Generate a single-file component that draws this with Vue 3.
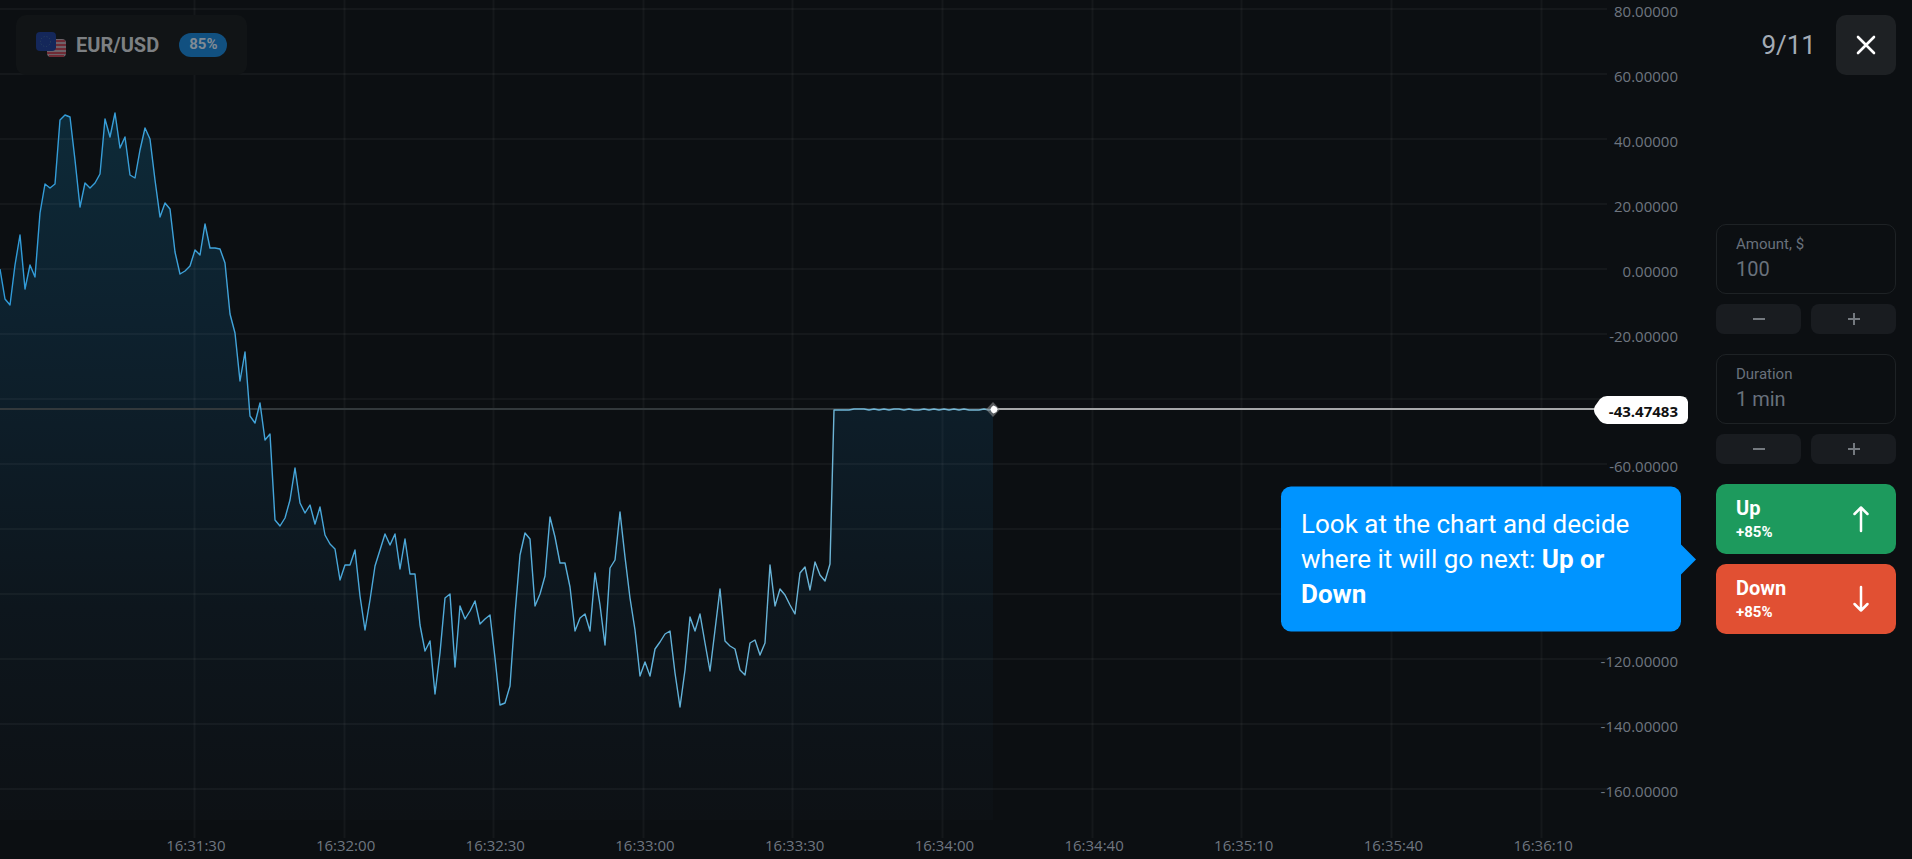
<script setup>
import { ref } from 'vue'

// Empty entries are ticks whose labels give way to the price marker and the hint
const prices = ['80.00000', '60.00000', '40.00000', '20.00000', '0.00000', '-20.00000', '', '-60.00000', '', '', '-120.00000', '-140.00000', '-160.00000']
const times = ['16:31:30', '16:32:00', '16:32:30', '16:33:00', '16:33:30', '16:34:00', '16:34:40', '16:35:10', '16:35:40', '16:36:10']

const height = 859
const current = { label: '-43.47483', y: 410 }

const rows = prices.map((_, i) => 9 + i * 65)
const columns = times.map((_, i) => Math.round(194 + i * 149.62))

// One sample every five units along the time axis
const samples = [
  269, 299, 305, 265, 235, 289, 265, 277, 213, 184, 188, 184, 120, 115, 117, 160, 207, 183, 188, 183,
  174, 119, 137, 113, 148, 137, 175, 178, 150, 128, 139, 180, 217, 203, 209, 252, 274, 271, 266, 250,
  255, 224, 248, 248, 249, 263, 314, 333, 381, 352, 416, 423, 403, 440, 434, 520, 526, 518, 500, 468,
  503, 513, 505, 524, 507, 535, 544, 549, 580, 565, 565, 550, 596, 630, 600, 566, 550, 534, 545, 534,
  569, 539, 574, 574, 625, 651, 641, 694, 653, 598, 594, 667, 606, 619, 611, 601, 624, 619, 615, 658,
  705, 703, 686, 614, 555, 533, 539, 606, 594, 576, 517, 537, 563, 563, 587, 631, 618, 614, 631, 573,
  605, 645, 568, 560, 512, 557, 598, 630, 676, 662, 676, 649, 642, 634, 631, 673, 707, 670, 617, 631,
  614, 643, 671, 630, 589, 641, 646, 649, 670, 675, 643, 640, 655, 643, 565, 606, 589, 595, 605, 614,
  573, 567, 590, 562, 575, 581, 564,
]
const ripple = [410, 410, 410, 410, 409, 409, 409, 410, 409, 410, 409, 410, 409, 409, 410, 409, 410, 410, 409, 410, 409, 410, 409, 410, 409, 410, 409, 410, 410, 410, 409, 410]
const line = [
  ...samples.map((y, i) => `${i * 5},${y}`),
  ...ripple.map((y, i) => `${834 + i * 5},${y}`),
  '993,409',
].join(' ')
const area = `0,820 ${line} 993,820`

const amount = ref('100')
const duration = ref('1 min')
</script>

<template>
  <main class="trade">
    <section class="chart" aria-label="EUR/USD chart">
      <svg class="plot" viewBox="0 0 1700 859" preserveAspectRatio="none" aria-hidden="true">
        <defs>
          <linearGradient id="area-fill" gradientUnits="userSpaceOnUse" x1="0" y1="110" x2="0" y2="820">
            <stop offset="0" stop-color="#0d2a38" />
            <stop offset="0.3" stop-color="#0d212e" />
            <stop offset="0.7" stop-color="#0d161d" />
            <stop offset="1" stop-color="#0d1115" />
          </linearGradient>
          <linearGradient id="line-stroke" gradientUnits="userSpaceOnUse" x1="0" y1="0" x2="993" y2="0">
            <stop offset="0" stop-color="#2f9ad8" />
            <stop offset="0.5" stop-color="#54addb" />
            <stop offset="1" stop-color="#78b8d4" />
          </linearGradient>
        </defs>
        <polygon :points="area" fill="url(#area-fill)" />
        <g class="grid">
          <line v-for="y in rows" :key="'r' + y" x1="0" x2="1607" :y1="y" :y2="y" />
          <line v-for="x in columns" :key="'c' + x" :x1="x + 0.5" :x2="x + 0.5" y1="0" y2="838" />
        </g>
        <line class="past" x1="0" x2="993" y1="409" y2="409" />
        <polyline :points="line" fill="none" stroke="url(#line-stroke)" stroke-width="1.4" stroke-linejoin="round" />
        <line class="now" x1="993" x2="1596" y1="409" y2="409" />
        <path d="M993 402l7 7.500-7 7.500-7-7.500z" fill="#8a8c8e" opacity=".6" />
        <path d="M993.500 405.500l3 1.500 1 2.500-1 2.500-3 1.500-2-1.500-1-2.500 1-2.500z" fill="#fff" />
      </svg>

      <header class="pair">
        <svg class="flags" viewBox="0 0 30 26" aria-hidden="true">
          <rect x="11" y="7" width="19" height="18" rx="4" fill="#6e6269" />
          <path d="M12 9h17M11 13h19M11 17h19M11 21h19M13 24h15" stroke="#6f2b35" stroke-width="2" />
          <path d="M11 7h9v9h-9z" fill="#1e2d5c" />
          <rect width="20" height="19" rx="4" fill="#14275a" />
          <circle cx="9.500" cy="9.500" r="5" fill="none" stroke="#2b4560" stroke-width="1" stroke-dasharray="1 2" />
        </svg>
        <h1>EUR/USD</h1>
        <span class="rate">85%</span>
      </header>

      <ol class="prices">
        <li v-for="(p, i) in prices" :key="i">{{ p }}</li>
      </ol>

      <strong class="current" :style="{ top: (current.y / height) * 100 + '%' }">
        <svg viewBox="0 0 95 28" preserveAspectRatio="none" aria-hidden="true">
          <path d="M14 0H87Q95 0 95 8V20Q95 28 87 28H14Q10 28 7 25L2 18Q0 14 2 10L7 3Q10 0 14 0Z" fill="#fff" />
        </svg>
        <span>{{ current.label }}</span>
      </strong>

      <ol class="times">
        <li v-for="t in times" :key="t">{{ t }}</li>
      </ol>
    </section>

    <aside class="panel">
      <div class="top">
        <span class="step">9/11</span>
        <button class="close" type="button" aria-label="Close">
          <svg viewBox="0 0 20 20" width="20" height="20" aria-hidden="true">
            <path d="M2 2l16 16M18 2L2 18" stroke="#fff" stroke-width="2.600" stroke-linecap="round" />
          </svg>
        </button>
      </div>

      <div class="controls">
        <div class="group">
          <div class="field">
            <label for="amount">Amount, $</label>
            <input id="amount" v-model="amount" type="text" />
          </div>
          <div class="steppers">
            <button type="button" aria-label="Decrease amount">
              <svg viewBox="0 0 14 14" width="14" height="14"><path d="M1 7h12" /></svg>
            </button>
            <button type="button" aria-label="Increase amount">
              <svg viewBox="0 0 14 14" width="14" height="14"><path d="M1 7h12M7 1v12" /></svg>
            </button>
          </div>
        </div>
        <div class="group">
          <div class="field">
            <label for="duration">Duration</label>
            <input id="duration" v-model="duration" type="text" />
          </div>
          <div class="steppers">
            <button type="button" aria-label="Decrease duration">
              <svg viewBox="0 0 14 14" width="14" height="14"><path d="M1 7h12" /></svg>
            </button>
            <button type="button" aria-label="Increase duration">
              <svg viewBox="0 0 14 14" width="14" height="14"><path d="M1 7h12M7 1v12" /></svg>
            </button>
          </div>
        </div>
        <div class="group deal">
          <button class="action up" type="button">
            <span class="caption"><b>Up</b><small>+85%</small></span>
            <svg viewBox="0 0 18 28" width="18" height="28" aria-hidden="true">
              <path d="M9 26V2.500M2.500 9L9 2.500 15.500 9" />
            </svg>
          </button>
          <button class="action down" type="button">
            <span class="caption"><b>Down</b><small>+85%</small></span>
            <svg viewBox="0 0 18 28" width="18" height="28" aria-hidden="true">
              <path d="M9 2v23.500M2.500 19L9 25.500 15.500 19" />
            </svg>
          </button>
          <p class="hint" role="tooltip">Look at the chart and decide where it will go next: <b>Up or Down</b></p>
        </div>
      </div>
    </aside>
  </main>
</template>

<style>
html,
body {
  background: #0c0f12;
}
</style>

<style scoped>
* {
  box-sizing: border-box;
}

.trade {
  display: flex;
  min-height: 100vh;
  background: #0c0f12;
  color: #6f7680;
  font-family: Roboto, "Liberation Sans", sans-serif;
}

.chart {
  position: relative;
  display: grid;
  grid-template-columns: 1fr auto;
  grid-template-rows: 1fr auto;
  flex: 1;
  min-width: 0;
}

.plot {
  position: absolute;
  inset: 0;
  width: 100%;
  height: 100%;
}

.plot line,
.plot polyline {
  vector-effect: non-scaling-stroke;
}

.grid line {
  stroke: #fff;
  stroke-opacity: 0.04;
  stroke-width: 2;
}

.plot .past {
  stroke: #33393c;
  stroke-width: 2;
}

.plot .now {
  stroke: #a5a7a8;
  stroke-width: 2;
}

.pair {
  position: relative;
  display: flex;
  align-items: center;
  align-self: start;
  justify-self: start;
  height: 60px;
  margin: 15px 0 0 16px;
  padding: 0 20px;
  border-radius: 10px;
  background: #111416;
}

.flags {
  width: 30px;
  height: 26px;
}

.pair h1 {
  margin: 0 20px 0 10px;
  color: #7d8083;
  font-size: 20px;
  line-height: 24px;
}

.rate {
  padding: 0 10px 2px;
  border-radius: 12px;
  background: #115080;
  color: #818b94;
  font-size: 15px;
  font-weight: 700;
  line-height: 22px;
}

.prices,
.times {
  position: relative;
  margin: 0;
  padding: 0;
  list-style: none;
  font-family: "Open Sans", "Noto Sans", sans-serif;
  font-size: 15px;
  line-height: 20px;
}

.prices {
  display: flex;
  flex-direction: column;
  justify-content: space-between;
  margin: 1px 22px 0 0;
  padding-bottom: 34px;
  text-align: right;
}

.prices li {
  height: 20px;
}

.current {
  position: absolute;
  right: 12px;
  padding: 5px 10px 3px 16px;
  color: #111;
  font-family: "Open Sans", "Noto Sans", sans-serif;
  font-size: 15px;
  font-weight: 700;
  line-height: 20px;
  transform: translateY(-50%);
}

.current svg {
  position: absolute;
  inset: 0;
  width: 100%;
  height: 100%;
}

.current span {
  position: relative;
}

.times {
  display: flex;
  grid-column: 1 / -1;
  margin: 0 82px 4px 121px;
}

.times li {
  flex: 1;
  text-align: center;
}

.panel {
  position: relative;
  display: flex;
  flex-direction: column;
  justify-content: center;
  width: 212px;
  padding: 95px 16px 96px;
}

.top {
  position: absolute;
  top: 15px;
  right: 16px;
  display: flex;
  align-items: center;
  gap: 20px;
}

.step {
  color: #a3abb5;
  font-size: 26px;
  line-height: 32px;
}

button {
  display: flex;
  align-items: center;
  justify-content: center;
  margin: 0;
  padding: 0;
  border: 0;
  font-family: inherit;
  cursor: pointer;
}

.close {
  width: 60px;
  height: 60px;
  border-radius: 10px;
  background: #1e2124;
}

.controls {
  display: flex;
  flex-direction: column;
  gap: 20px;
}

.group {
  display: flex;
  flex-direction: column;
  gap: 10px;
}

.field {
  display: flex;
  flex-direction: column;
  height: 70px;
  padding: 8px 19px;
  border: 1px solid #1e2225;
  border-radius: 10px;
}

.field label {
  color: #69717c;
  font-size: 15px;
  line-height: 22px;
}

.field input {
  width: 100%;
  padding: 0;
  border: 0;
  outline: 0;
  background: transparent;
  color: #69717c;
  font-family: inherit;
  font-size: 20px;
  line-height: 28px;
}

.steppers {
  display: flex;
  gap: 10px;
}

.steppers button {
  flex: 1;
  height: 30px;
  border-radius: 8px;
  background: #191c20;
}

.steppers path {
  stroke: #74797f;
  stroke-width: 2;
}

.deal {
  position: relative;
}

.action {
  justify-content: space-between;
  height: 70px;
  padding: 0 26px 0 20px;
  border-radius: 10px;
  color: #fff;
  text-align: left;
}

.up {
  background: #1d9a5d;
}

.down {
  background: #e15033;
}

.caption {
  display: flex;
  flex-direction: column;
}

.caption b {
  font-size: 20px;
  line-height: 26px;
}

.caption small {
  font-size: 15px;
  font-weight: 700;
  line-height: 22px;
}

.action path {
  fill: none;
  stroke: #fff;
  stroke-width: 2.5;
  stroke-linecap: round;
  stroke-linejoin: round;
}

.hint {
  position: absolute;
  top: 50%;
  right: calc(100% + 35px);
  width: 400px;
  margin: 0;
  padding: 20px;
  border-radius: 10px;
  background: #0094ff;
  color: #fff;
  font-size: 26px;
  line-height: 35px;
  transform: translateY(-50%);
}

.hint::after {
  content: "";
  position: absolute;
  top: calc(50% - 15px);
  left: 100%;
  border: 15px solid transparent;
  border-right: 0;
  border-left-color: #0094ff;
}
</style>
